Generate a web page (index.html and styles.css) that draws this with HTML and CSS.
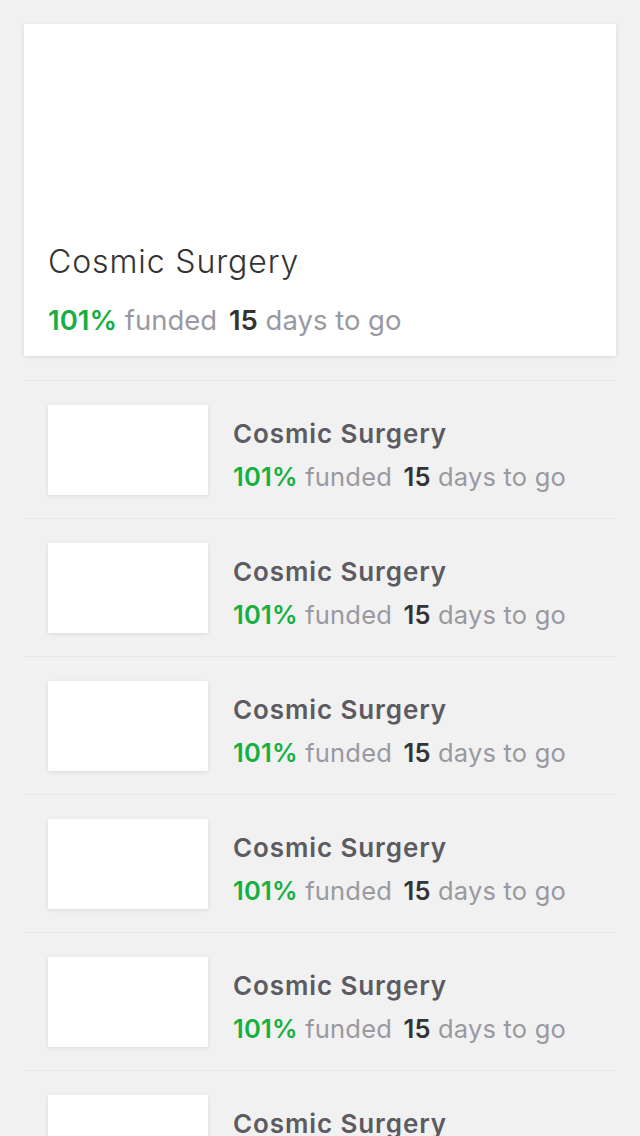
FILE: index.html
```html
<!DOCTYPE html>
<html>
<head>
<meta charset="utf-8">
<link rel="stylesheet" href="styles.css">
</head>
<body>
<div class="page">
  <div class="feature">
    <div class="feature-title">Cosmic Surgery</div>
    <div class="stats feature-stats"><span class="pct">101%</span> funded <span class="num">15</span> days to go</div>
  </div>
  <div class="list">
    <div class="row"><div class="thumb"></div><div class="info"><div class="row-title">Cosmic Surgery</div><div class="stats row-stats"><span class="pct">101%</span> funded <span class="num">15</span> days to go</div></div></div>
    <div class="row"><div class="thumb"></div><div class="info"><div class="row-title">Cosmic Surgery</div><div class="stats row-stats"><span class="pct">101%</span> funded <span class="num">15</span> days to go</div></div></div>
    <div class="row"><div class="thumb"></div><div class="info"><div class="row-title">Cosmic Surgery</div><div class="stats row-stats"><span class="pct">101%</span> funded <span class="num">15</span> days to go</div></div></div>
    <div class="row"><div class="thumb"></div><div class="info"><div class="row-title">Cosmic Surgery</div><div class="stats row-stats"><span class="pct">101%</span> funded <span class="num">15</span> days to go</div></div></div>
    <div class="row"><div class="thumb"></div><div class="info"><div class="row-title">Cosmic Surgery</div><div class="stats row-stats"><span class="pct">101%</span> funded <span class="num">15</span> days to go</div></div></div>
    <div class="row"><div class="thumb"></div><div class="info"><div class="row-title">Cosmic Surgery</div><div class="stats row-stats"><span class="pct">101%</span> funded <span class="num">15</span> days to go</div></div></div>
  </div>
</div>
</body>
</html>
```
FILE: styles.css
```css
html, body {
  margin: 0;
  padding: 0;
  background: #f1f1f1;
  font-family: Inter, "Liberation Sans", sans-serif;
}
.page {
  padding: 24px 24px 0;
  height: 1112px;
  overflow: hidden;
}
.feature {
  background: #fff;
  height: 332px;
  box-sizing: border-box;
  padding: 0 24px 20px;
  display: flex;
  flex-direction: column;
  justify-content: flex-end;
  box-shadow: 0 1px 4px rgba(0,0,0,0.10);
}
.feature-title {
  font-size: 32px;
  font-weight: 300;
  color: #333;
  line-height: 40px;
  letter-spacing: 0.9px;
  margin-bottom: 22px;
}
.stats {
  color: #9a99a1;
  font-weight: 400;
  white-space: nowrap;
}
.stats .pct {
  color: #16b042;
  font-weight: 600;
}
.stats .num {
  color: #333;
  font-weight: 600;
  margin-left: 4px;
}
.feature-stats {
  font-size: 27.5px;
  line-height: 32px;
}
.list {
  margin-top: 24px;
}
.row {
  border-top: 1px solid #e6e6e6;
  padding: 24px 0 23px 24px;
  display: flex;
  align-items: flex-start;
}
.thumb {
  width: 160px;
  height: 90px;
  background: #fff;
  box-shadow: 0 1px 4px rgba(0,0,0,0.10);
  flex: none;
}
.info {
  margin-left: 25px;
  margin-top: 13px;
}
.row-title {
  font-size: 26px;
  font-weight: 600;
  color: #5c5b61;
  line-height: 32px;
  letter-spacing: 0.9px;
}
.row-stats {
  font-size: 25.5px;
  line-height: 30px;
  letter-spacing: 0.2px;
  margin-top: 12px;
}
```
